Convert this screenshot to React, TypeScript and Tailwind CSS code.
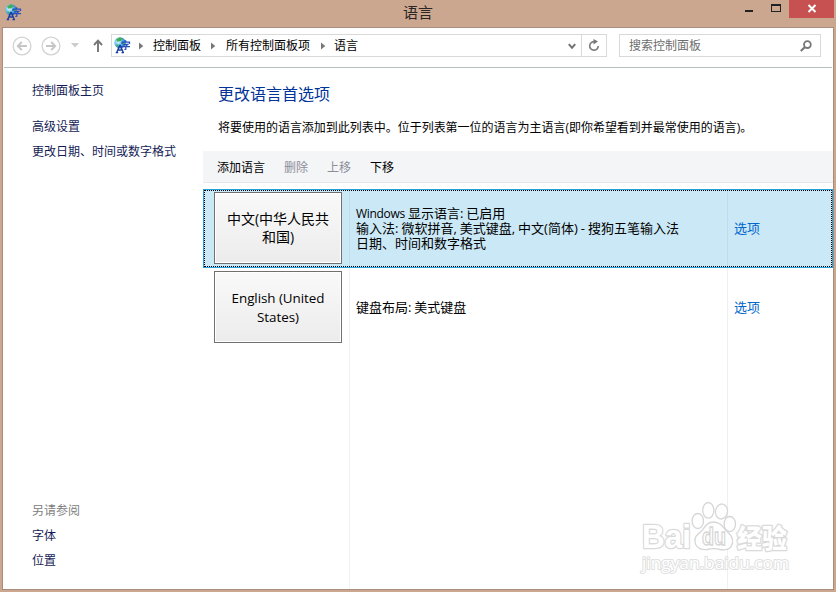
import type { ReactNode } from "react";

const font = "font-['Open_Sans','Noto_Sans_CJK_SC',sans-serif]";

function GlobeIcon() {
  return (
    <svg width="17" height="17" viewBox="0 0 17 17" className="shrink-0">
      <defs>
        <radialGradient id="globe" cx="0.35" cy="0.4" r="0.7">
          <stop offset="0" stopColor="#e6faff" />
          <stop offset="0.45" stopColor="#6cc4ee" />
          <stop offset="1" stopColor="#1552b8" />
        </radialGradient>
      </defs>
      <circle cx="6" cy="5.8" r="5.6" fill="url(#globe)" />
      <path d="M2 2.5 5.5.5 9 1.3 6.8 4 3.5 4.7zM8 5l3 .5.5 2.5-3-1zM2 7l2.5 1-.5 2.4z" fill="#3fae55" />
      <path d="M2.7 15.5 5.7 8.500h.6l3 7M4 13h4M1.700 15.600h2.500M7.500 15.600H10" fill="none" stroke="#1c3f9f" strokeWidth="1.4" />
      <path d="M11.700 3.200v1.700M8 7V5.200h7.500V7M9.400 7.300h4.400l-2 1.700v3.200l-1.500.3M7.500 9.700h8.500" fill="none" stroke="#2450c0" strokeWidth="1.25" />
    </svg>
  );
}

function Triangle() {
  return (
    <svg width="5" height="8" viewBox="0 0 5 8" className="shrink-0">
      <path d="M0 0.5 4.3 4 0 7.5z" fill="#777" />
    </svg>
  );
}

function NavCircle({ flip }: { flip?: boolean }) {
  return (
    <svg width="20" height="20" viewBox="0 0 20 20" className={flip ? "-scale-x-100 shrink-0" : "shrink-0"}>
      <circle cx="10" cy="10" r="8.9" fill="none" stroke="#d2d2d2" strokeWidth="1.3" />
      <path d="M15 10H6M9.8 6 5.8 10l4 4" fill="none" stroke="#c6c6c6" strokeWidth="1.9" />
    </svg>
  );
}

function TitleBar() {
  return (
    <header className="flex h-[27px] shrink-0 items-start">
      <div className="flex w-[180px] pt-[4px] pl-[5px]">
        <GlobeIcon />
      </div>
      <div className="flex-1 pl-[223px] pt-[2px] text-[15px] leading-[21px] text-[#2b2523]">语言</div>
      <svg width="90" height="18" viewBox="0 0 90 18" className="shrink-0">
        <path d="M1 10h8v2H1z" fill="#222" />
        <path d="M27 4h10v8H27zM28 6v5h8V6z" fillRule="evenodd" fill="#222" />
        <path d="M45 0h45v18H45z" fill="#c75050" />
        <path d="m64.5 5 7 7m0-7-7 7" stroke="#fff" strokeWidth="2" />
      </svg>
      <div className="w-[2px]" />
    </header>
  );
}

function AddressBar() {
  return (
    <div className="mx-px flex h-[40px] shrink-0 items-start border-b border-[#b9bebe] pt-[6px] pl-[8px] text-[12px]">
      <div className="flex h-[23px] w-[99px] items-center">
        <NavCircle />
        <div className="w-[9px]" />
        <NavCircle flip />
        <svg width="8" height="5" viewBox="0 0 8 5" className="ml-[10px]">
          <path d="M0 0h8L4 4.5z" fill="#ccc" />
        </svg>
        <svg width="10" height="13" viewBox="0 0 10 13" className="ml-[14px]">
          <path d="M5 13V2M1 6l4-4.3L9 6" fill="none" stroke="#757575" strokeWidth="1.9" />
        </svg>
      </div>
      <div className="flex h-[23px] w-[496px] border border-[#d9d9d9]">
        <div className="flex flex-1 items-center pl-[2px] text-black">
          <GlobeIcon />
          <div className="w-[8px]" />
          <Triangle />
          <span className="mr-[10px] ml-[9px]">控制面板</span>
          <Triangle />
          <span className="mr-[11px] ml-[10px]">所有控制面板项</span>
          <Triangle />
          <span className="ml-[8px]">语言</span>
        </div>
        <svg width="8" height="7" viewBox="0 0 8 7" className="mt-[8px] mr-[5px]">
          <path d="m.8 1.2 3.2 3.6 3.2-3.6" fill="none" stroke="#707070" strokeWidth="2" />
        </svg>
        <div className="flex w-[25px] items-center justify-center border-l border-[#d9d9d9]">
          <svg width="12" height="13" viewBox="0 0 12 13">
            <path d="M6.5 2.6A4.3 4.3 0 1 0 10.3 7" fill="none" stroke="#808080" strokeWidth="1.7" />
            <path d="M5.5 0 10 2.6 5.5 5.5z" fill="#777" />
          </svg>
        </div>
      </div>
      <div className="ml-[12px] flex h-[23px] w-[202px] items-center justify-between border border-[#d9d9d9] pr-[8px] pl-[9px] text-[#6d6d6d]">
        搜索控制面板
        <svg width="12" height="12" viewBox="0 0 12 12">
          <circle cx="7.4" cy="4.6" r="3.4" fill="none" stroke="#777" strokeWidth="1.8" />
          <path d="m5 7-4.2 4" stroke="#777" strokeWidth="2.2" />
        </svg>
      </div>
    </div>
  );
}

function Sidebar() {
  return (
    <nav className="flex w-[200px] shrink-0 flex-col pt-[13px] pl-[29px] text-[12px] leading-[20px] text-[#151c55]">
      <div>控制面板主页</div>
      <div className="mt-[16px]">高级设置</div>
      <div className="mt-[5px]">更改日期、时间或数字格式</div>
      <div className="mt-auto text-[#808080]">另请参阅</div>
      <div className="mt-[5px]">字体</div>
      <div className="mt-[5px] mb-[18px]">位置</div>
    </nav>
  );
}

function LanguageButton({ children }: { children: ReactNode }) {
  return (
    <div className="h-[72px] w-[128px] border border-[#707070] bg-white p-px">
      <div className="flex h-full items-center justify-center bg-linear-to-b from-[#f9f9f9] to-[#ececec] text-center text-black">
        {children}
      </div>
    </div>
  );
}

function PawLogo() {
  return (
    <svg width="156" height="82" viewBox="0 0 156 82" className="absolute top-[497px] left-[638px]">
      <g fill="#fff" stroke="#dadada" strokeWidth="2.6" strokeLinejoin="round" className="[paint-order:stroke]">
        <text x="4" y="51" fontSize="34" fontWeight="700" textLength="49" lengthAdjust="spacingAndGlyphs" className="font-['Liberation_Sans',sans-serif]">Bai</text>
        <text x="99" y="51" fontSize="26" fontWeight="900" textLength="50" lengthAdjust="spacingAndGlyphs" className="font-['Noto_Sans_CJK_SC',sans-serif]">经验</text>
      </g>
      <text x="4" y="72" fontSize="17" fill="#fff" stroke="#e0e0e0" strokeWidth="2" strokeLinejoin="round" textLength="147" lengthAdjust="spacingAndGlyphs" className="font-['Open_Sans',sans-serif] [paint-order:stroke]">jingyan.baidu.com</text>
      <g fill="#fff" stroke="#d6d6d6" strokeWidth="1.3">
        <ellipse cx="59.8" cy="24" rx="5.7" ry="7.5" />
        <ellipse cx="70.3" cy="13.3" rx="5.6" ry="7.8" />
        <ellipse cx="83.5" cy="14.5" rx="6" ry="7.5" transform="rotate(8 83.5 14.5)" />
        <ellipse cx="91.8" cy="27" rx="5.7" ry="7.5" />
        <path d="M75.5 25c-6 0-8 4-11 8-4 4-8.5 6-7.5 12 1 7 8 8 12 7.5 4-1 9-1 13 0 5 1 11 0 12.5-6.5 1-6-3-9-7-13-3-4-6-8-12-8z" />
        <text x="64" y="48" fontSize="23" fontWeight="700" textLength="24" lengthAdjust="spacingAndGlyphs" className="font-['Liberation_Sans',sans-serif]">du</text>
      </g>
    </svg>
  );
}

export default function App() {
  return (
    <div className={`relative flex h-[592px] w-[836px] flex-col overflow-hidden bg-[#cca790] ${font}`}>
      <TitleBar />
      <div className="mr-[2px] ml-[2px] flex h-[563px] w-[832px] flex-col border border-[#ab8b7c] bg-white">
        <AddressBar />
        <div className="flex min-h-0 flex-1">
          <Sidebar />
          <main className="flex min-w-0 flex-1 flex-col">
            <h1 className="pt-[14px] pl-[15px] text-[16px] leading-[24px] text-[#003399]">更改语言首选项</h1>
            <p className="mt-[12px] pl-[15px] text-[12px] leading-[20px] tracking-[-0.02px] whitespace-nowrap text-black">
              将要使用的语言添加到此列表中。位于列表第一位的语言为主语言(即你希望看到并最常使用的语言)。
            </p>
            <div className="mt-[13px] flex h-[32px] items-center gap-[19px] border-b border-[#e5e7ea] bg-[#f4f5f7] pt-[2px] pl-[14px] text-[12px] text-black">
              <span>添加语言</span>
              <span className="text-[#8d8d9b]">删除</span>
              <span className="text-[#8d8d9b]">上移</span>
              <span>下移</span>
            </div>
            <div className="mt-[6px] h-[79px] border border-[#26a0da] bg-[#cbe8f6]">
              <div className="flex h-full border border-dotted border-black text-[13px] leading-[15px] text-black">
                <div className="w-[145px] border-r border-[#bcdff0] pt-px pl-[9px]">
                  <LanguageButton>
                    <div className="text-[14px] leading-[18px]">中文(中华人民共<br />和国)</div>
                  </LanguageButton>
                </div>
                <div className="flex w-[378px] items-center border-r border-[#bcdff0] pl-[6px] whitespace-nowrap">
                  <div className="[word-spacing:-0.4px]">
                    <div><span className="text-[12px] tracking-[-0.3px]">Windows</span> 显示语言: 已启用</div>
                    <div>输入法: 微软拼音, 美式键盘, 中文(简体) - 搜狗五笔输入法</div>
                    <div>日期、时间和数字格式</div>
                  </div>
                </div>
                <div className="flex items-center pl-[6px] text-[#0066cc]">选项</div>
              </div>
            </div>
            <div className="flex min-h-0 flex-1 text-[13px] text-black">
              <div className="w-[147px] border-r border-[#edf2fa] pt-[3px] pl-[11px]">
                <LanguageButton>
                  <div className="pt-[2px] text-[13.4px] leading-[19px] tracking-[-0.05px]">English (United<br />States)</div>
                </LanguageButton>
              </div>
              <div className="w-[378px] border-r border-[#edf0f7] pt-[29px] pl-[6px] leading-[20px] [word-spacing:-0.6px]">键盘布局: 美式键盘</div>
              <div className="pt-[29px] pl-[6px] leading-[20px] text-[#0066cc]">选项</div>
            </div>
          </main>
        </div>
      </div>
      <PawLogo />
    </div>
  );
}
